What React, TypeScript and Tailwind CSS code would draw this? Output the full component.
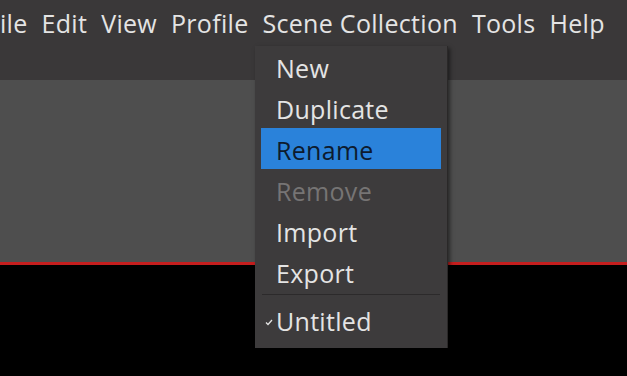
import React from 'react';

const menus = ['ile', 'Edit', 'View', 'Profile', 'Scene Collection', 'Tools', 'Help'];

const items: { label: string; state?: 'active' | 'disabled' }[] = [
  { label: 'New' },
  { label: 'Duplicate' },
  { label: 'Rename', state: 'active' },
  { label: 'Remove', state: 'disabled' },
  { label: 'Import' },
  { label: 'Export' }
];

export default function App() {
  return (
    <div
      className="relative h-[376px] w-[627px] overflow-hidden bg-black text-[#e4e4e4]"
      style={{ fontFamily: '"Open Sans", "Noto Sans", sans-serif' }}
    >
      <div className="h-[80px] bg-[#3a3839]">
        <div className="flex h-[46px] items-center gap-[14px] text-[25px] leading-none tracking-[0.3px]">
          {menus.map((m) => (
            <span key={m} className="whitespace-nowrap">
              {m}
            </span>
          ))}
        </div>
      </div>
      <div className="h-[182px] bg-[#4e4e4e]" />
      <div className="h-[3px] bg-[#c41e1e]" />

      <div className="absolute left-[255px] top-[46px] w-[193px] border-r border-[#2a2828] bg-[#3d3b3c] pb-[8px] shadow-[2px_2px_4px_rgba(0,0,0,0.5)] text-[25px] leading-none tracking-[0.3px]">
        {items.map((it) => (
          <div
            key={it.label}
            className={
              it.state === 'active'
                ? 'mx-[6px] flex h-[41px] items-center bg-[#2a82da] pl-[15px] pt-[4px] text-[#0d1b2e]'
                : it.state === 'disabled'
                  ? 'mx-[6px] flex h-[41px] items-center pl-[15px] pt-[4px] text-[#767474]'
                  : 'mx-[6px] flex h-[41px] items-center pl-[15px] pt-[4px]'
            }
          >
            {it.label}
          </div>
        ))}
        <div className="mx-[7px] my-[2px] h-px bg-[#2c2a2b]" />
        <div className="relative mx-[6px] flex h-[43px] items-center pl-[15px] pt-[6px]">
          <svg className="absolute left-[4px] top-[22px]" width="8" height="7" viewBox="0 0 8 7">
            <path d="M1 3.5 L3 5.5 L7 1" fill="none" stroke="#e4e4e4" strokeWidth="1.3" />
          </svg>
          Untitled
        </div>
      </div>
    </div>
  );
}
